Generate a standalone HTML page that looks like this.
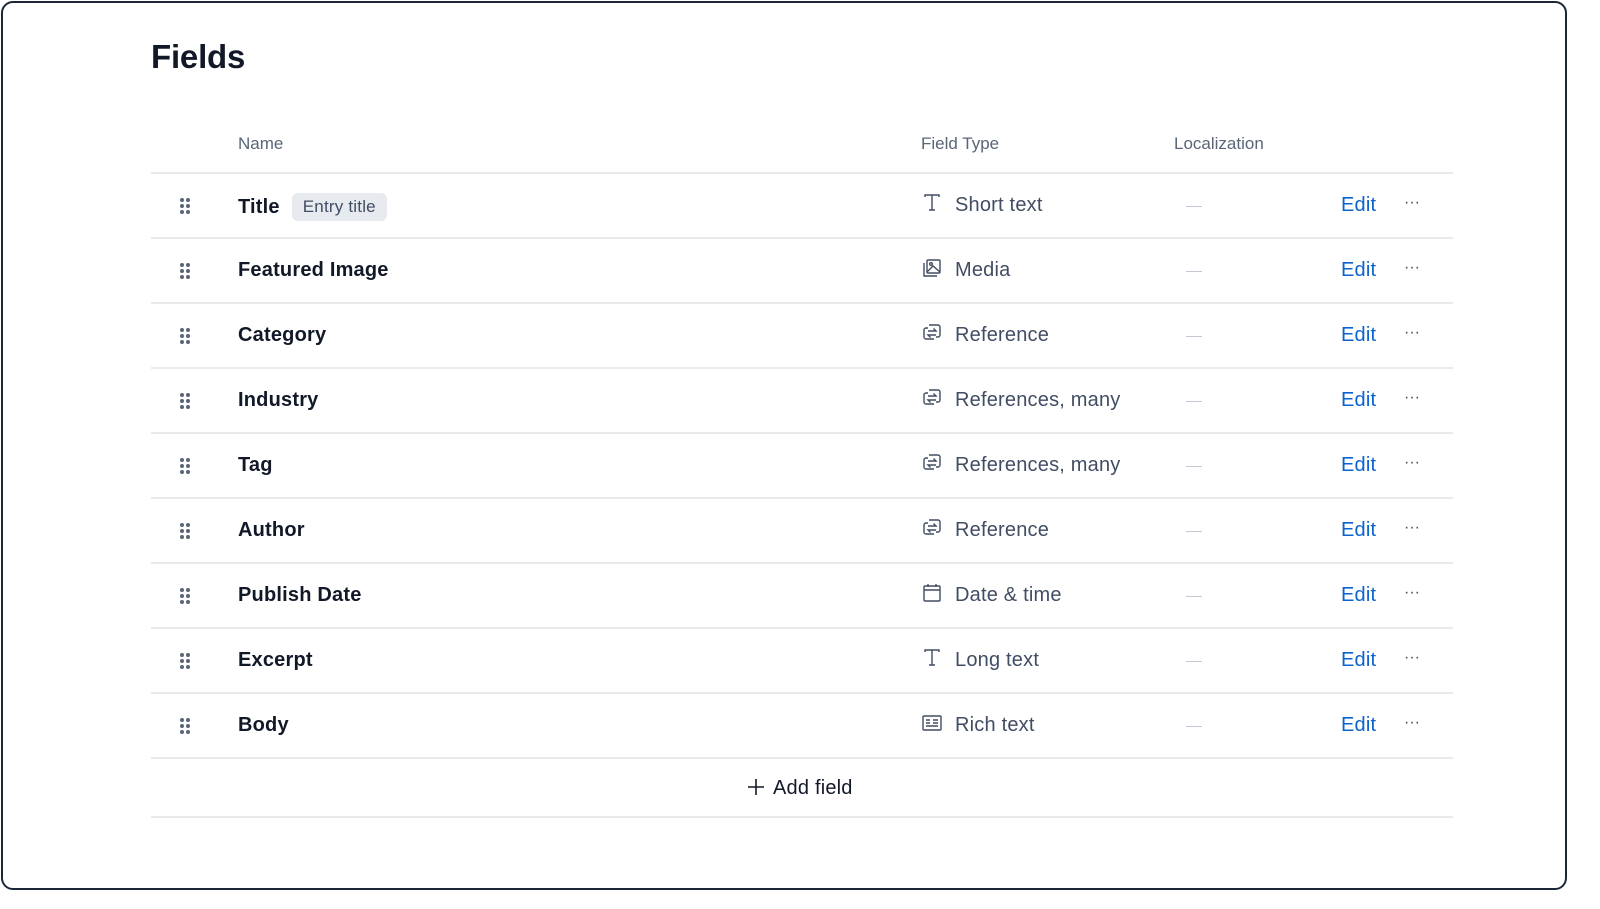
<!DOCTYPE html>
<html><head><style>
*{margin:0;padding:0;box-sizing:border-box}
body{width:1600px;height:909px;background:#fff;font-family:"Liberation Sans",sans-serif;position:relative;overflow:hidden}
.frame{position:absolute;left:1px;top:1px;width:1566px;height:889px;border:2px solid #1b2738;border-radius:12px}
h1{position:absolute;left:151px;top:38px;font-size:33px;font-weight:700;color:#111827;letter-spacing:-0.2px}
.hd{position:absolute;top:134px;font-size:17px;color:#5a6577}
.line{position:absolute;left:151px;width:1302px;height:2px;background:#e8eaee}
.row{position:absolute;left:151px;width:1302px;height:65px}
.drag{position:absolute;left:28px;top:24px;width:12px;height:18px}
.name{position:absolute;left:87px;top:21px;font-size:20px;font-weight:700;color:#111827;letter-spacing:0.2px}
.badge{display:inline-block;margin-left:12px;background:#e7eaee;color:#414d63;font-weight:400;font-size:17px;padding:4px 11px;border-radius:6px;position:relative;top:-1px;letter-spacing:0.2px}
.ico{position:absolute;left:771px;top:20px;width:20px;height:20px}
.type{position:absolute;left:804px;top:21px;font-size:20px;color:#414d63;letter-spacing:0.2px}
.dash{position:absolute;left:1035px;top:33px;width:16px;height:1px;background:#c3c9d2}
.edit{position:absolute;left:1190px;top:21px;font-size:20px;color:#0a63d0;letter-spacing:0.2px}
.more{position:absolute;left:1253px;top:21px;font-size:16px;color:#414d63;letter-spacing:0px}
.add{position:absolute;left:747px;top:777px;font-size:20px;color:#111827;letter-spacing:0.2px}
</style></head><body>
<div class="frame"></div>
<h1>Fields</h1>
<div class="hd" style="left:238px">Name</div>
<div class="hd" style="left:921px">Field Type</div>
<div class="hd" style="left:1174px">Localization</div>
<div class="line" style="top:172px"></div>

<svg width="0" height="0" style="position:absolute">
<defs>
<g id="dr" fill="#5a6577"><circle cx="3" cy="3" r="2"/><circle cx="9" cy="3" r="2"/><circle cx="3" cy="9" r="2"/><circle cx="9" cy="9" r="2"/><circle cx="3" cy="15" r="2"/><circle cx="9" cy="15" r="2"/></g>
<g id="T" fill="none" stroke="#414d63" stroke-width="1.4"><path d="M3 4V2H17V4M10 2V17M7 17H13"/></g>
<g id="M" fill="none" stroke="#414d63" stroke-width="1.4"><rect x="5" y="2" width="13" height="13" rx="1"/><path d="M2 5V18H15"/><circle cx="9" cy="6" r="1.3"/><path d="M5 14L11 8L18 14"/></g>
<g id="R" fill="none" stroke="#414d63" stroke-width="1.4"><path d="M7 2H16a2 2 0 0 1 2 2V12a2 2 0 0 1-2 2H14"/><path d="M12 16H4a2 2 0 0 1-2-2V7a2 2 0 0 1 2-2H6"/><path d="M6 8H14L11.5 5.5M14 12H6L8.5 14.5"/></g>
<g id="D" fill="none" stroke="#414d63" stroke-width="1.4"><rect x="2" y="3" width="16" height="15" rx="1"/><path d="M2 7H18M6 1V4M14 1V4"/></g>
<g id="RT" fill="none" stroke="#414d63" stroke-width="1.4"><rect x="1" y="3" width="18" height="14" rx="1"/><path d="M4 7H8M4 10H8M11 7H16M4 13H16M11 10H16"/></g>
</defs></svg>

<div class="row" style="top:173px"><svg class="drag"><use href="#dr"/></svg><div class="name">Title<span class="badge">Entry title</span></div><svg class="ico"><use href="#T"/></svg><div class="type">Short text</div><div class="dash"></div><div class="edit">Edit</div><div class="more">···</div></div>
<div class="line" style="top:237px"></div>
<div class="row" style="top:238px"><svg class="drag"><use href="#dr"/></svg><div class="name">Featured Image</div><svg class="ico"><use href="#M"/></svg><div class="type">Media</div><div class="dash"></div><div class="edit">Edit</div><div class="more">···</div></div>
<div class="line" style="top:302px"></div>
<div class="row" style="top:303px"><svg class="drag"><use href="#dr"/></svg><div class="name">Category</div><svg class="ico"><use href="#R"/></svg><div class="type">Reference</div><div class="dash"></div><div class="edit">Edit</div><div class="more">···</div></div>
<div class="line" style="top:367px"></div>
<div class="row" style="top:368px"><svg class="drag"><use href="#dr"/></svg><div class="name">Industry</div><svg class="ico"><use href="#R"/></svg><div class="type">References, many</div><div class="dash"></div><div class="edit">Edit</div><div class="more">···</div></div>
<div class="line" style="top:432px"></div>
<div class="row" style="top:433px"><svg class="drag"><use href="#dr"/></svg><div class="name">Tag</div><svg class="ico"><use href="#R"/></svg><div class="type">References, many</div><div class="dash"></div><div class="edit">Edit</div><div class="more">···</div></div>
<div class="line" style="top:497px"></div>
<div class="row" style="top:498px"><svg class="drag"><use href="#dr"/></svg><div class="name">Author</div><svg class="ico"><use href="#R"/></svg><div class="type">Reference</div><div class="dash"></div><div class="edit">Edit</div><div class="more">···</div></div>
<div class="line" style="top:562px"></div>
<div class="row" style="top:563px"><svg class="drag"><use href="#dr"/></svg><div class="name">Publish Date</div><svg class="ico"><use href="#D"/></svg><div class="type">Date &amp; time</div><div class="dash"></div><div class="edit">Edit</div><div class="more">···</div></div>
<div class="line" style="top:627px"></div>
<div class="row" style="top:628px"><svg class="drag"><use href="#dr"/></svg><div class="name">Excerpt</div><svg class="ico"><use href="#T"/></svg><div class="type">Long text</div><div class="dash"></div><div class="edit">Edit</div><div class="more">···</div></div>
<div class="line" style="top:692px"></div>
<div class="row" style="top:693px"><svg class="drag"><use href="#dr"/></svg><div class="name">Body</div><svg class="ico"><use href="#RT"/></svg><div class="type">Rich text</div><div class="dash"></div><div class="edit">Edit</div><div class="more">···</div></div>
<div class="line" style="top:757px"></div>
<div class="add"><svg width="18" height="18" style="vertical-align:-2px;margin-right:8px"><path d="M9 1V17M1 9H17" stroke="#111827" stroke-width="1.6"/></svg>Add field</div>
<div class="line" style="top:816px"></div>
</body></html>
